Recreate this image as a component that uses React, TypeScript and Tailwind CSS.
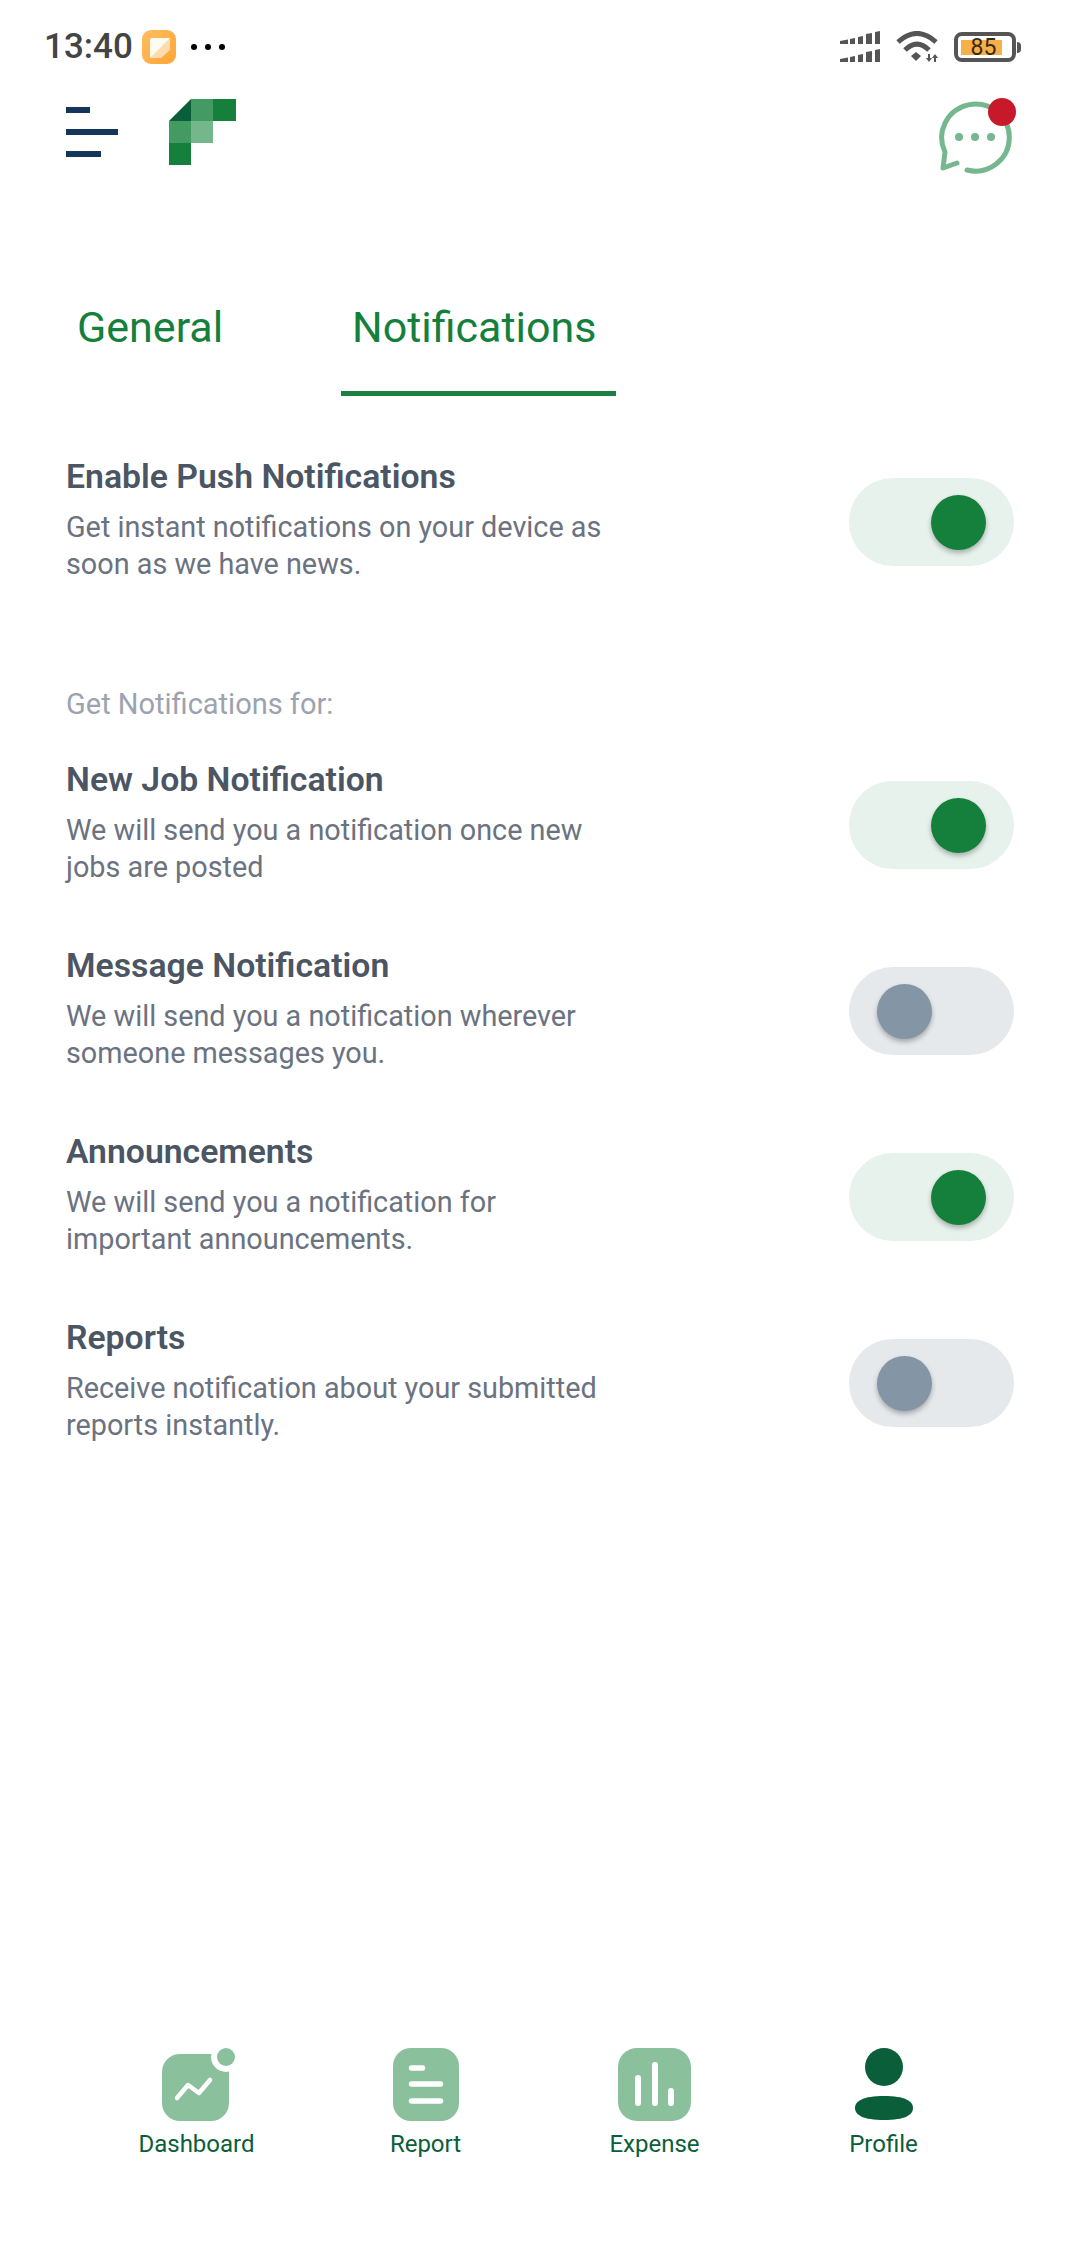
const rows = [
  { title: 'New Job Notification', text: 'We will send you a notification once new jobs are posted', on: true },
  { title: 'Message Notification', text: 'We will send you a notification wherever someone messages you.', on: false },
  { title: 'Announcements', text: 'We will send you a notification for important announcements.', on: true },
  { title: 'Reports', text: 'Receive notification about your submitted reports instantly.', on: false },
];

const Toggle = ({ on }: { on: boolean }) => (
  <div className={`mt-[24px] flex h-[88px] w-[165px] shrink-0 items-center rounded-full px-[28px] ${on ? 'justify-end bg-[#e7f2ec]' : 'justify-start bg-[#e6e9ec]'}`}>
    <div className={`h-[55px] w-[55px] rounded-full shadow-[0_3px_5px_rgba(0,0,0,0.28)] ${on ? 'bg-[#14803c]' : 'bg-[#8495a6]'}`}></div>
  </div>
);

const Row = ({ title, text, on }: { title: string; text: string; on: boolean }) => (
  <div className="flex items-start justify-between px-[66px]">
    <div className="w-[550px]">
      <h3 className="text-[33.75px] leading-[46px] font-semibold text-[#4b5563]">{title}</h3>
      <p className="mt-[9px] text-[28.8px] leading-[37px] text-[#6b7280]">{text}</p>
    </div>
    <Toggle on={on} />
  </div>
);

const StatusBar = () => (
  <div className="flex h-[34px] items-center justify-between pr-[59px] pl-[44px]">
    <div className="flex items-center">
      <span className="text-[35px] leading-[34px] font-medium text-[#444444]">13:40</span>
      <svg className="ml-[9px]" width="34" height="34" viewBox="0 0 34 34">
        <defs>
          <linearGradient id="note" x1="0" y1="0" x2="1" y2="1">
            <stop offset="0" stopColor="#ffbd5e" />
            <stop offset="1" stopColor="#ffa537" />
          </linearGradient>
        </defs>
        <rect width="34" height="34" rx="9" fill="url(#note)" />
        <path d="M8 10 Q8 8 10 8 H26 Q28 8 28 10 V20 L19 28 H10 Q8 28 8 26 Z" fill="#ffdcae" />
        <path d="M8 10 Q8 8 10 8 H28 L8 28 Z" fill="#fffaf2" />
      </svg>
      <div className="ml-[15px] flex gap-[8px]">
        <div className="h-[6px] w-[6px] rounded-full bg-black"></div>
        <div className="h-[6px] w-[6px] rounded-full bg-black"></div>
        <div className="h-[6px] w-[6px] rounded-full bg-black"></div>
      </div>
    </div>
    <div className="flex items-center">
      <svg width="40" height="32" viewBox="0 0 40 32" fill="#555555">
        <path d="M0 10 L8 8.500 V13 H0 Z M10 8 L15 7 V13 H10 Z M18 6 L23 5 V13 H18 Z M26 3 L32 2 V13 H26 Z M35 1 L40 0 V13 H35 Z" />
        <path d="M0 28 L8 26.500 V31 H0 Z M10 26 L15 25 V31 H10 Z M18 24 L23 23 V31 H18 Z M26 21 L32 20 V31 H26 Z M35 19 L40 18 V31 H35 Z" />
      </svg>
      <svg className="ml-[16px]" width="42" height="32" viewBox="0 0 42 32" fill="none" stroke="#555555" strokeWidth="5">
        <path d="M2 11 Q21 -6 40 11" />
        <path d="M9 19 Q21 7 33 19" />
        <path d="M15 25 L20 21 L25 25 L20 30 Z" fill="#555555" stroke="none" />
        <path d="M33 23 V29 M39 25 V31" strokeWidth="2" />
        <path d="M30 27 L33 31 L36 27 Z M36 27 L39 23 L42 27 Z" fill="#555555" stroke="none" />
      </svg>
      <div className="ml-[16px] flex h-[30px] w-[62px] items-center rounded-[8px] border-[4px] border-[#555555] pl-[3px]">
        <div className="flex h-[15px] w-[41px] items-center justify-center bg-[#f6b04a] pl-[4px] text-[23px] leading-[15px] text-[#3a2a10]">85</div>
      </div>
      <div className="ml-[1px] h-[11px] w-[4px] rounded-r-full bg-[#555555]"></div>
    </div>
  </div>
);

const Logo = () => (
  <svg className="ml-[51px]" width="67" height="66" viewBox="0 0 67 66">
    <polygon points="22,0 22,22 0,22" fill="#0b5e3a" />
    <rect x="22" y="0" width="22" height="22" fill="#439b63" />
    <rect x="44" y="0" width="23" height="22" fill="#14803c" />
    <rect x="0" y="22" width="22" height="22" fill="#439b63" />
    <rect x="22" y="22" width="22" height="22" fill="#73b78b" />
    <rect x="0" y="44" width="22" height="22" fill="#14803c" />
  </svg>
);

const Header = () => (
  <div className="mt-[35px] flex h-[76px] items-start justify-between pr-[60px] pl-[66px]">
    <div className="flex items-start">
      <div className="mt-[8px] flex flex-col gap-[16px]">
        <div className="h-[6px] w-[24px] bg-[#14365a]"></div>
        <div className="h-[6px] w-[52px] bg-[#14365a]"></div>
        <div className="h-[6px] w-[35px] bg-[#14365a]"></div>
      </div>
      <Logo />
    </div>
    <div className="relative h-[76px] w-[80px]">
      <svg className="absolute top-[-9px] left-[-10px]" width="90" height="90" viewBox="0 0 90 90" fill="none" stroke="#75b78e" strokeWidth="5" strokeLinecap="round" strokeLinejoin="round">
        <path d="M37 80 A33.800 33.500 0 1 0 15 62 L13 78 L27 73" />
        <circle cx="29" cy="47" r="4" fill="#75b78e" stroke="none" />
        <circle cx="45" cy="47" r="4" fill="#75b78e" stroke="none" />
        <circle cx="61" cy="47" r="4" fill="#75b78e" stroke="none" />
      </svg>
      <div className="absolute top-[-1px] left-[48px] h-[28px] w-[28px] rounded-full bg-[#c8192b]"></div>
    </div>
  </div>
);

const Tabs = () => (
  <div className="mt-[125px] flex gap-[103px] pl-[60px]">
    <div className="h-[96px] w-[178px] pl-[17px] text-[43px] leading-[54px] text-[#14803c]">General</div>
    <div className="h-[96px] w-[275px] border-b-[5px] border-[#1c7f41] pl-[11px] text-[43px] leading-[54px] text-[#14803c]">Notifications</div>
  </div>
);

const BottomNav = () => (
  <div className="mt-auto grid h-[126px] grid-cols-4 px-[82px]">
    <div className="flex flex-col items-center">
      <svg width="76" height="73" viewBox="0 0 76 73">
        <rect x="3" y="6" width="67" height="67" rx="18" fill="#8bc09d" />
        <circle cx="67" cy="9" r="15" fill="#ffffff" />
        <circle cx="67" cy="9" r="9" fill="#8bc09d" />
        <path d="M18 50 L29 37 L40 45 L51 32" fill="none" stroke="#ffffff" strokeWidth="4.500" strokeLinecap="round" strokeLinejoin="round" />
      </svg>
      <span className="mt-[8px] text-[24px] leading-[30px] text-[#0b5e3a]">Dashboard</span>
    </div>
    <div className="flex flex-col items-center">
      <svg width="66" height="73" viewBox="0 0 66 73">
        <rect width="66" height="73" rx="18" fill="#8bc09d" />
        <path d="M18.500 20 H29.500 M18.500 36 H47.500 M18.500 53 H47.500" stroke="#ffffff" strokeWidth="5.500" strokeLinecap="round" />
      </svg>
      <span className="mt-[8px] text-[24px] leading-[30px] text-[#0b5e3a]">Report</span>
    </div>
    <div className="flex flex-col items-center">
      <svg width="73" height="73" viewBox="0 0 73 73">
        <rect width="73" height="73" rx="19" fill="#8bc09d" />
        <path d="M20 30 V55 M37 17 V55 M53 43 V55" stroke="#ffffff" strokeWidth="6" strokeLinecap="round" />
      </svg>
      <span className="mt-[8px] text-[24px] leading-[30px] text-[#0b5e3a]">Expense</span>
    </div>
    <div className="flex flex-col items-center">
      <svg width="58" height="73" viewBox="0 0 58 73">
        <circle cx="29" cy="19" r="19" fill="#0b5e3a" />
        <path d="M29 48 C50 48 58 53 58 60 C58 67 50 72 29 72 C8 72 0 67 0 60 C0 53 8 48 29 48 Z" fill="#0b5e3a" />
      </svg>
      <span className="mt-[8px] text-[24px] leading-[30px] text-[#0b5e3a]">Profile</span>
    </div>
  </div>
);

export default function App() {
  return (
    <div className="flex h-[2246px] w-[1080px] flex-col bg-white pt-[30px] pb-[72px] [font-family:Roboto,sans-serif]">
      <StatusBar />
      <Header />
      <Tabs />

      <div className="mt-[58px]">
        <Row
          title="Enable Push Notifications"
          text="Get instant notifications on your device as soon as we have news."
          on
        />
      </div>

      <p className="mt-[103px] px-[66px] text-[29px] leading-[36px] text-[#9ca3af]">Get Notifications for:</p>

      <div className="mt-[35px] flex flex-col gap-[57px]">
        {rows.map((row) => (
          <Row key={row.title} title={row.title} text={row.text} on={row.on} />
        ))}
      </div>

      <BottomNav />
    </div>
  );
}
